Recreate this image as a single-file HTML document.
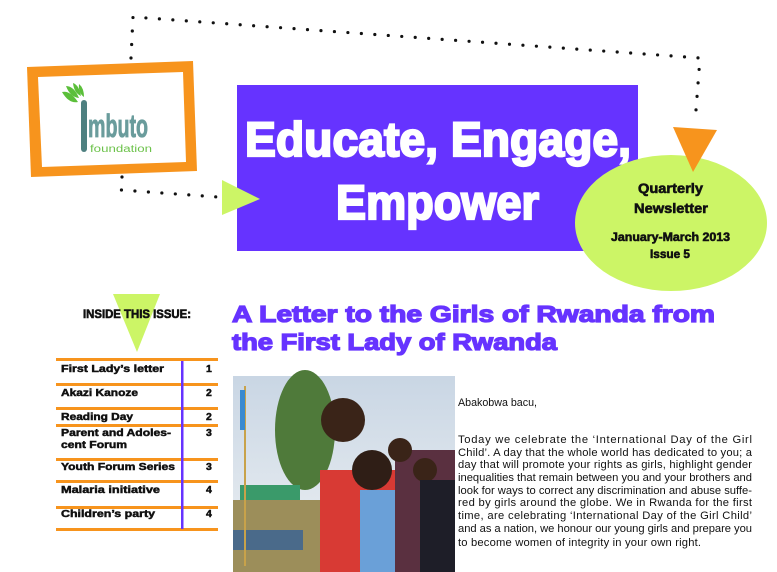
<!DOCTYPE html>
<html><head><meta charset="utf-8"><style>
html,body{margin:0;padding:0;background:#fff;width:777px;height:572px;overflow:hidden}
svg{display:block}
text{font-family:"Liberation Sans",sans-serif}
.b{font-weight:bold}
</style></head><body>
<svg width="777" height="572" viewBox="0 0 777 572" xmlns="http://www.w3.org/2000/svg">
<rect width="777" height="572" fill="#fff"/>
<g stroke="#111" stroke-width="3.2" stroke-linecap="round" stroke-dasharray="0 13.5" fill="none">
<path d="M131 58 L133 17 L700 58 L695 123"/>
<path d="M122 177 L121 190 L218 197"/>
</g>
<polygon points="27,67 193,61 197,171 31,177" fill="#f7941d"/>
<polygon points="38,77 183,72 186,162 42,167" fill="#fff"/>
<g fill="#5bbf3a">
<path d="M62 92 q8 -2 16 10 q-9 2 -16 -10z"/>
<path d="M66 86 q8 0 13 12 q-9 -1 -13 -12z"/>
<path d="M73 83 q6 2 8 13 q-7 -3 -8 -13z"/>
<path d="M79 84 q5 4 5 13 q-6 -4 -5 -13z"/>
</g>
<rect x="81" y="100" width="6" height="52" rx="3" fill="#4e8080"/>
<text x="88" y="137" font-size="32" class="b" fill="#6a9c9c" stroke="#6a9c9c" stroke-width="0.8" textLength="60" lengthAdjust="spacingAndGlyphs">mbuto</text>
<text x="90" y="152" font-size="10" fill="#6cc24a" textLength="62" lengthAdjust="spacingAndGlyphs">foundation</text>
<rect x="237" y="85" width="401" height="166" fill="#6633ff"/>
<g class="b" fill="#fff" stroke="#fff" stroke-width="2.2">
<text x="245" y="156" font-size="48" textLength="386" lengthAdjust="spacingAndGlyphs">Educate, Engage,</text>
<text x="336" y="219" font-size="48" textLength="203" lengthAdjust="spacingAndGlyphs">Empower</text>
</g>
<polygon points="222,180 260,199 222,215" fill="#ccf566"/>
<ellipse cx="671" cy="223" rx="96" ry="68" fill="#ccf566"/>
<polygon points="673,127 717,130 693,172" fill="#f7941d"/>
<g class="b" fill="#111" stroke="#111" stroke-width="0.6">
<text x="638" y="193" font-size="14" textLength="65" lengthAdjust="spacingAndGlyphs">Quarterly</text>
<text x="634" y="213" font-size="14" textLength="74" lengthAdjust="spacingAndGlyphs">Newsletter</text>
<text x="611" y="241" font-size="12" textLength="119" lengthAdjust="spacingAndGlyphs">January-March 2013</text>
<text x="650" y="258" font-size="12" textLength="40" lengthAdjust="spacingAndGlyphs">Issue 5</text>
</g>
<polygon points="113,294 160,294 137,352" fill="#ccf566"/>
<text x="83" y="318" font-size="12" class="b" fill="#111" stroke="#111" stroke-width="0.6" textLength="108" lengthAdjust="spacingAndGlyphs">INSIDE THIS ISSUE:</text>
<g fill="#f7941d">
<rect x="56" y="358" width="162" height="3"/>
<rect x="56" y="383" width="162" height="3"/>
<rect x="56" y="407" width="162" height="3"/>
<rect x="56" y="424" width="162" height="3"/>
<rect x="56" y="458" width="162" height="3"/>
<rect x="56" y="480" width="162" height="3"/>
<rect x="56" y="506" width="162" height="3"/>
<rect x="56" y="528" width="162" height="3"/>
</g>
<rect x="181" y="361" width="2.5" height="168" fill="#6633ff"/>
<g font-size="10.5" class="b" fill="#111" stroke="#111" stroke-width="0.5">
<text x="61" y="372" textLength="103" lengthAdjust="spacingAndGlyphs">First Lady’s letter</text>
<text x="61" y="396" textLength="77" lengthAdjust="spacingAndGlyphs">Akazi Kanoze</text>
<text x="61" y="420" textLength="72" lengthAdjust="spacingAndGlyphs">Reading Day</text>
<text x="61" y="436" textLength="110" lengthAdjust="spacingAndGlyphs">Parent and Adoles-</text>
<text x="61" y="448" textLength="66" lengthAdjust="spacingAndGlyphs">cent Forum</text>
<text x="61" y="470" textLength="114" lengthAdjust="spacingAndGlyphs">Youth Forum Series</text>
<text x="61" y="493" textLength="99" lengthAdjust="spacingAndGlyphs">Malaria initiative</text>
<text x="61" y="517" textLength="94" lengthAdjust="spacingAndGlyphs">Children’s party</text>
<text x="206" y="372">1</text>
<text x="206" y="396">2</text>
<text x="206" y="420">2</text>
<text x="206" y="436">3</text>
<text x="206" y="470">3</text>
<text x="206" y="493">4</text>
<text x="206" y="517">4</text>
</g>
<g font-size="23" class="b" fill="#6633ff" stroke="#6633ff" stroke-width="1.3">
<text x="232" y="322" textLength="483" lengthAdjust="spacingAndGlyphs">A Letter to the Girls of Rwanda from</text>
<text x="232" y="350" textLength="325" lengthAdjust="spacingAndGlyphs">the First Lady of Rwanda</text>
</g>
<defs>
<linearGradient id="sky" x1="0" y1="0" x2="0" y2="1"><stop offset="0" stop-color="#c9d6e4"/><stop offset="1" stop-color="#eef1f3"/></linearGradient>
</defs>
<rect x="233" y="376" width="222" height="196" fill="url(#sky)"/>
<ellipse cx="305" cy="430" rx="30" ry="60" fill="#4f7a3a"/>
<rect x="240" y="485" width="60" height="20" fill="#3a9a6a"/>
<rect x="233" y="500" width="100" height="72" fill="#9c8e5a"/>
<rect x="233" y="530" width="70" height="20" fill="#4a6a8a"/>
<rect x="244" y="386" width="2" height="180" fill="#c8a24a"/>
<rect x="240" y="390" width="5" height="40" fill="#3a8ad0"/>
<rect x="320" y="470" width="80" height="102" fill="#d83a34"/>
<circle cx="343" cy="420" r="22" fill="#3a2418"/>
<circle cx="372" cy="470" r="20" fill="#2f1e16"/>
<rect x="360" y="490" width="35" height="82" fill="#6aa0d8"/>
<rect x="395" y="450" width="60" height="122" fill="#5a3040"/>
<circle cx="400" cy="450" r="12" fill="#3a2418"/>
<circle cx="425" cy="470" r="12" fill="#3a2418"/>
<rect x="420" y="480" width="35" height="92" fill="#1e1e28"/>
<g font-size="11.2" fill="#111">
<text x="458" y="406" textLength="79" lengthAdjust="spacingAndGlyphs">Abakobwa bacu,</text>
<text x="458" y="443" textLength="294" lengthAdjust="spacing">Today we celebrate the ‘International Day of the Girl</text>
<text x="458" y="456" textLength="294" lengthAdjust="spacing">Child’. A day that the whole world has dedicated to you; a</text>
<text x="458" y="468" textLength="294" lengthAdjust="spacing">day that will promote your rights as girls, highlight gender</text>
<text x="458" y="481" textLength="294" lengthAdjust="spacing">inequalities that remain between you and your brothers and</text>
<text x="458" y="494" textLength="294" lengthAdjust="spacing">look for ways to correct any discrimination and abuse suffe-</text>
<text x="458" y="506" textLength="294" lengthAdjust="spacing">red by girls around the globe. We in Rwanda for the first</text>
<text x="458" y="519" textLength="294" lengthAdjust="spacing">time, are celebrating ‘International Day of the Girl Child’</text>
<text x="458" y="532" textLength="294" lengthAdjust="spacing">and as a nation, we honour our young girls and prepare you</text>
<text x="458" y="546" textLength="243" lengthAdjust="spacing">to become women of integrity in your own right.</text>
</g>
</svg>
</body></html>
